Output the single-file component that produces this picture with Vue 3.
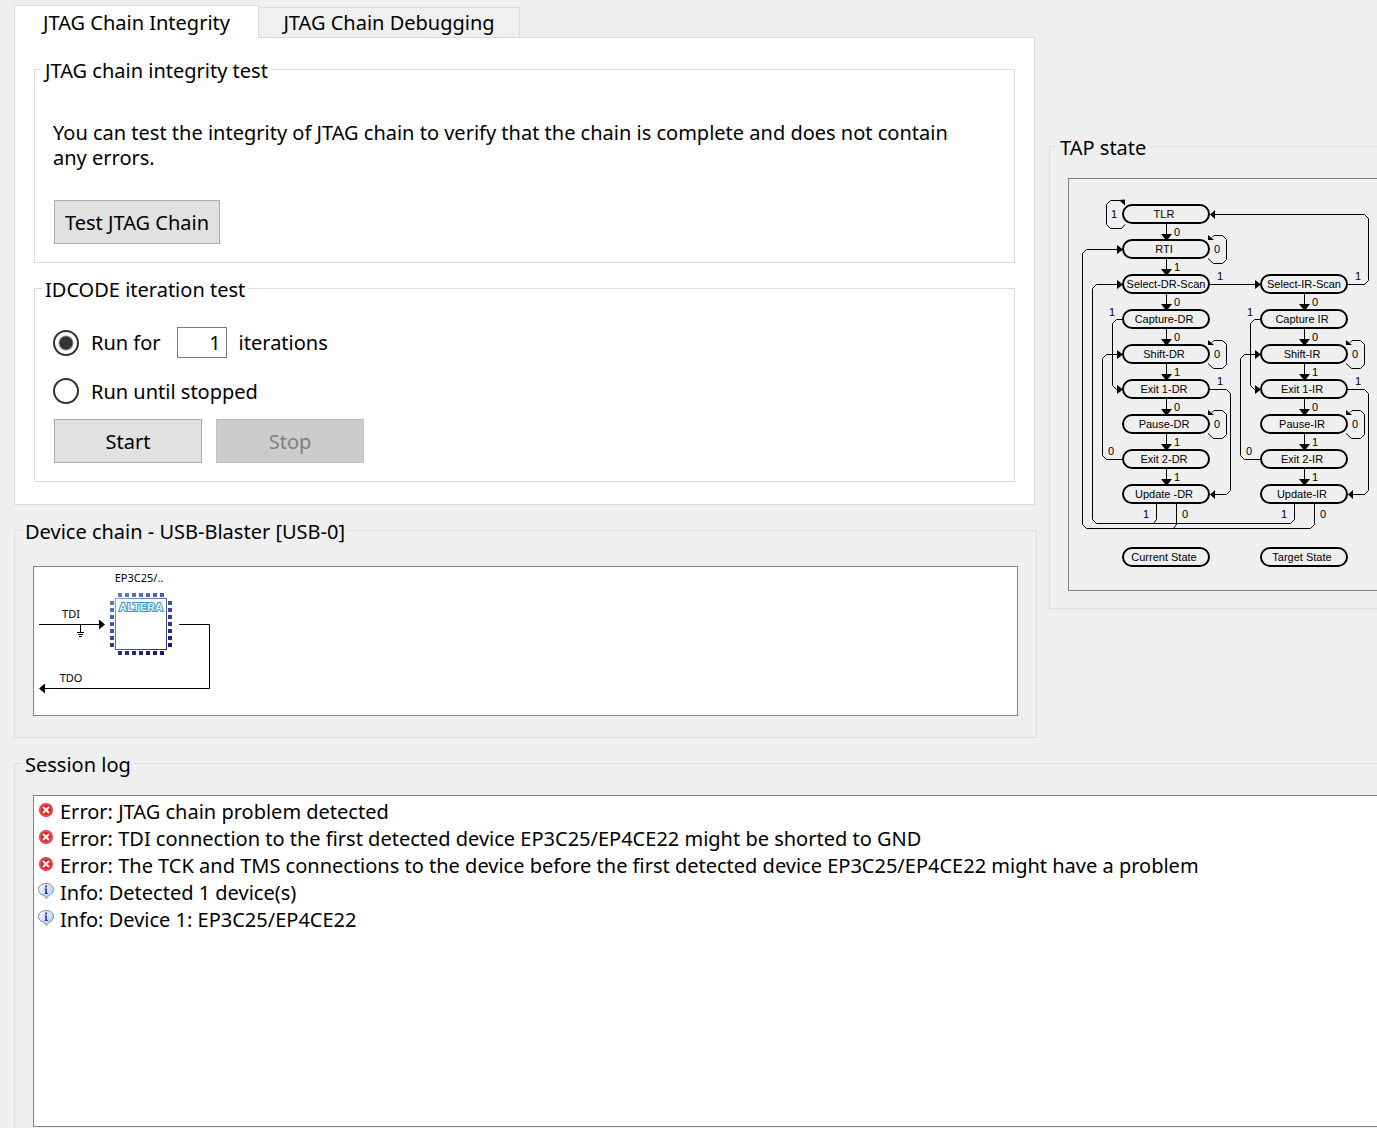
<script setup>
import { ref } from 'vue'

const mode = ref('count')
const iterations = ref('1')
const activeTab = ref(0)
const tabs = ['JTAG Chain Integrity', 'JTAG Chain Debugging']

const log = [
  { kind: 'error', text: 'Error: JTAG chain problem detected' },
  { kind: 'error', text: 'Error: TDI connection to the first detected device EP3C25/EP4CE22 might be shorted to GND' },
  { kind: 'error', text: 'Error: The TCK and TMS connections to the device before the first detected device EP3C25/EP4CE22 might have a problem' },
  { kind: 'info', text: 'Info: Detected 1 device(s)' },
  { kind: 'info', text: 'Info: Device 1: EP3C25/EP4CE22' },
]

// Chip pins: light blue at the top left, navy at the bottom right
const pinColor = (x, y) => {
  const t = Math.min(1, Math.max(0, ((x - 76) * 0.4 + (y - 26) * 0.8) / 64))
  const mix = (a, b) => Math.round(a + (b - a) * t)
  return `rgb(${mix(92, 30)}, ${mix(132, 24)}, ${mix(200, 116)})`
}
const pins = []
for (let i = 0; i < 7; i++) {
  pins.push({ x: 84 + i * 7, y: 26 }, { x: 84 + i * 7, y: 84 })
  pins.push({ x: 76, y: 34 + i * 7 }, { x: 134, y: 34 + i * 7 })
}

// TAP controller: column x offset, row top
const row = (r) => 26 + r * 35
const states = [
  { label: 'TLR', x: 0, y: row(0) },
  { label: 'RTI', x: 0, y: row(1) },
  { label: 'Select-DR-Scan', x: 0, y: row(2), tx: 97 },
  { label: 'Capture-DR', x: 0, y: row(3) },
  { label: 'Shift-DR', x: 0, y: row(4) },
  { label: 'Exit 1-DR', x: 0, y: row(5) },
  { label: 'Pause-DR', x: 0, y: row(6) },
  { label: 'Exit 2-DR', x: 0, y: row(7) },
  { label: 'Update -DR', x: 0, y: row(8) },
  { label: 'Select-IR-Scan', x: 138, y: row(2), tx: 97 },
  { label: 'Capture IR', x: 138, y: row(3) },
  { label: 'Shift-IR', x: 138, y: row(4) },
  { label: 'Exit 1-IR', x: 138, y: row(5) },
  { label: 'Pause-IR', x: 138, y: row(6) },
  { label: 'Exit 2-IR', x: 138, y: row(7) },
  { label: 'Update-IR', x: 138, y: row(8) },
  { label: 'Current State', x: 0, y: 369 },
  { label: 'Target State', x: 138, y: 369 },
]
const bits = ['0', '1', '0', '0', '1', '0', '1', '1']
const steps = [
  ...bits.map((bit, r) => ({ bit, x: 0, y: row(r) })),
  ...bits.slice(2).map((bit, r) => ({ bit, x: 138, y: row(r + 2) })),
]
const loops = [
  { x: 0, y: row(1) },
  { x: 0, y: row(4) },
  { x: 0, y: row(6) },
  { x: 138, y: row(4) },
  { x: 138, y: row(6) },
]
</script>

<template>
  <main class="page">
    <div class="top">
      <div class="left">
        <section class="tabs">
          <div class="tablist" role="tablist">
            <button
              v-for="(tab, i) in tabs"
              :key="tab"
              type="button"
              role="tab"
              class="tab"
              :class="{ active: i === activeTab }"
              :aria-selected="i === activeTab"
              @click="activeTab = i"
            >{{ tab }}</button>
          </div>
          <div class="panel" role="tabpanel">
            <fieldset class="group">
              <legend>JTAG chain integrity test</legend>
              <div class="body integrity">
                <p>You can test the integrity of JTAG chain to verify that the chain is complete and does not contain any errors.</p>
                <div class="actions">
                  <button type="button" class="btn test">Test JTAG Chain</button>
                </div>
              </div>
            </fieldset>
            <fieldset class="group">
              <legend>IDCODE iteration test</legend>
              <div class="body idcode">
                <div class="option count">
                  <input id="run-count" v-model="mode" type="radio" name="mode" value="count">
                  <label for="run-count">Run for</label>
                  <input id="iterations" v-model="iterations" class="number" type="text">
                  <label for="iterations">iterations</label>
                </div>
                <div class="option">
                  <input id="run-until" v-model="mode" type="radio" name="mode" value="until">
                  <label for="run-until">Run until stopped</label>
                </div>
                <div class="actions">
                  <button type="button" class="btn">Start</button>
                  <button type="button" class="btn" disabled>Stop</button>
                </div>
              </div>
            </fieldset>
          </div>
        </section>

        <fieldset class="group">
          <legend>Device chain - USB-Blaster [USB-0]</legend>
          <div class="body device">
            <div class="canvas white">
              <svg width="200" height="148" viewBox="0 0 200 148">
                <defs>
                  <linearGradient id="chip" x1="0" y1="0" x2="1" y2="1">
                    <stop offset="0" stop-color="#86a8d8" />
                    <stop offset="1" stop-color="#23306e" />
                  </linearGradient>
                </defs>
                <path class="wire" d="M5 57.5H68M46.5 58V65M43 65.5H50M44 67.5H49M45 69.5H48M145 57.5H175.5V121.5H8" />
                <path d="M65 52.5L71 57.5L65 62.5ZM11 116.5L5 121.5L11 126.5Z" />
                <rect x="81.5" y="31.5" width="51" height="51" fill="#fff" stroke="url(#chip)" />
                <rect v-for="(p, i) in pins" :key="i" :x="p.x" :y="p.y" width="4" height="4" :fill="pinColor(p.x, p.y)" />
                <text class="brand" x="107" y="44" text-anchor="middle">ALTERA</text>
                <g class="net">
                  <text x="105" y="15" text-anchor="middle">EP3C25/..</text>
                  <text x="37" y="51" text-anchor="middle">TDI</text>
                  <text x="37" y="115" text-anchor="middle">TDO</text>
                </g>
              </svg>
            </div>
          </div>
        </fieldset>
      </div>

      <fieldset class="group tap">
        <legend>TAP state</legend>
        <div class="body tap-body">
          <div class="canvas open">
            <svg class="states" width="308" height="411" viewBox="0 0 308 411">
              <path class="wire" d="M51 21.5H41.5L37.5 25.5V45.5L41.5 49.5H52.5L56 45.5" />
              <path d="M50 21L56 20.500V26.500Z" />
              <path class="wire" d="M146 35.5H295.500L299.500 39.500V101.500L295.500 105.500H279M141 105.500H190" />
              <path class="wire" d="M52 70.500H17.500L13.500 74.500V345.500L17.500 349.500H241.500L245.500 345.500V324M107.500 324V345.500L104.500 349.500" />
              <path class="wire" d="M52 105.500H27.500L23.500 109.500V340.500L27.500 344.500H221.500L225.500 340.500V324M87.500 324V340.500L84.500 344.500" />
              <path d="M146 31V40L141 35.500ZM48 66V75L54 70.500ZM48 101V110L54 105.500ZM186 101V110L192 105.500Z" />
              <g v-for="x in [0, 138]" :key="x" :transform="`translate(${x} 0)`">
                <path class="wire" d="M53 140.500H47.500L43.500 144.500V206.500L47.500 210.500H52" />
                <path class="wire" d="M52 175.500H37.500L33.500 179.500V276.500L37.500 280.500H53" />
                <path class="wire" d="M141 210.500H157.500L161.500 214.500V311.500L157.500 315.500H146" />
                <path d="M48 206V215L54 210.500ZM48 171V180L54 175.500ZM146 311V320L141 315.500Z" />
                <g text-anchor="middle">
                  <text x="43" y="137">1</text>
                  <text x="42" y="276">0</text>
                  <text x="151" y="101">1</text>
                  <text x="151" y="206">1</text>
                  <text x="77" y="339">1</text>
                  <text x="116" y="339">0</text>
                </g>
              </g>
              <text x="45" y="39" text-anchor="middle">1</text>
              <g v-for="(s, i) in steps" :key="'s' + i" :transform="`translate(${s.x} ${s.y})`">
                <path class="wire" d="M97.500 19V32" />
                <path d="M92 29H103L99 34H96Z" />
                <text x="105" y="31">{{ s.bit }}</text>
              </g>
              <g v-for="(l, i) in loops" :key="'l' + i" :transform="`translate(${l.x} ${l.y})`">
                <path class="wire" d="M143 -2.500L145 -4.500H153.500L157.500 -0.500V19.500L153.500 23.500H144.500L139 18.500" />
                <path d="M139 -5V0H145Z" />
                <text x="148" y="13" text-anchor="middle">0</text>
              </g>
              <g v-for="s in states" :key="s.label" :transform="`translate(${s.x} ${s.y})`">
                <rect class="state" x="54" width="86" height="18" rx="9" />
                <text :x="s.tx || 95" y="13" text-anchor="middle">{{ s.label }}</text>
              </g>
            </svg>
          </div>
        </div>
      </fieldset>
    </div>

    <fieldset class="group session">
      <legend>Session log</legend>
      <div class="body session-body">
        <ul class="log">
          <li v-for="line in log" :key="line.text">
            <svg v-if="line.kind === 'error'" width="16" height="16" viewBox="0 0 16 16">
              <circle cx="8" cy="8" r="7" fill="#e2252b" />
              <circle cx="8" cy="8" r="6" fill="none" stroke="#f0686a" />
              <path d="M5 5L11 11M11 5L5 11" stroke="#fff" stroke-width="2" />
            </svg>
            <svg v-else width="16" height="16" viewBox="0 0 16 16">
              <defs>
                <linearGradient id="bubble" x1="0" y1="0" x2="1" y2="1">
                  <stop offset="0" stop-color="#fff" />
                  <stop offset="1" stop-color="#a9c4f0" />
                </linearGradient>
              </defs>
              <path d="M8 .5C12.200 .5 15.500 3 15.500 6.500C15.500 9.300 13.500 11.500 11 12.200L8.500 15.500L6 12.300C2.800 11.800 .5 9.500 .5 6.500C.5 3 3.800 .5 8 .5Z" fill="url(#bubble)" stroke="#76879f" />
              <path d="M7 2.500H9V4.500H7ZM6.500 5.500H9V10H10V11H6.500V10H7.200V6.500H6.500Z" fill="#2747a8" />
            </svg>
            <span>{{ line.text }}</span>
          </li>
        </ul>
      </div>
    </fieldset>
  </main>
</template>

<style>
body {
  background: #efefef;
}
</style>

<style scoped>
.page,
.page * {
  box-sizing: border-box;
}
.page {
  height: 100vh;
  display: flex;
  flex-direction: column;
  gap: 11px;
  padding: 5px 0 0 14px;
  font-family: "Noto Sans", sans-serif;
  font-size: 20px;
  line-height: 25px;
  color: #000;
}
.page button,
.page input {
  font: inherit;
  color: inherit;
  margin: 0;
}
svg {
  display: block;
  flex: none;
}
.top {
  flex: none;
  display: grid;
  grid-template-columns: minmax(0, 1fr) 328px;
  gap: 12px;
  align-items: start;
}
.left {
  display: flex;
  flex-direction: column;
  gap: 11px;
}
.tabs {
  margin-right: 2px;
}
.tablist {
  display: flex;
  align-items: flex-end;
}
.tab {
  height: 30px;
  min-width: 261px;
  padding: 0 21px;
  border: 1px solid #dadada;
  border-width: 1px 1px 0 0;
  background: #f0f0f0;
  white-space: nowrap;
}
.tab.active {
  height: 33px;
  min-width: 245px;
  margin-bottom: -1px;
  border-left-width: 1px;
  background: #fff;
  position: relative;
}
.panel {
  display: flex;
  flex-direction: column;
  gap: 11px;
  padding: 17px 19px 22px;
  border: 1px solid #dadada;
  background: #fff;
}
.group {
  min-width: 0;
  margin: 0;
  padding: 0;
  border: 1px solid #dcdcdc;
}
legend {
  height: 28px;
  margin-left: 7px;
  padding: 3px 3px 0;
}
.body {
  padding: 0 18px 18px;
}
.integrity {
  padding-top: 37px;
}
.integrity p {
  margin: 0 0 30px;
  padding-right: 24px;
}
.btn {
  width: 148px;
  height: 44px;
  padding: 0;
  border: 1px solid #adadad;
  background: #e1e1e1;
}
.page .btn:disabled {
  border-color: #bfbfbf;
  background: #ccc;
  color: #808080;
}
.btn.test {
  width: 166px;
}
.idcode {
  padding-top: 25px;
}
.option {
  display: flex;
  align-items: center;
  height: 26px;
  margin-bottom: 15px;
}
.option.count {
  height: 31px;
  margin-bottom: 20px;
}
.option input[type="radio"] {
  appearance: none;
  width: 26px;
  height: 26px;
  margin-right: 12px;
  border: 2px solid #333;
  border-radius: 50%;
  background: #fff;
}
.option input[type="radio"]:checked {
  background: radial-gradient(circle, #333 6px, #fff 8px);
}
.page .number {
  width: 50px;
  height: 31px;
  margin: 0 12px 0 16px;
  padding: 0 5px;
  border: 1px solid #7a7a7a;
  background: #fff;
  text-align: right;
}
.actions {
  display: flex;
  gap: 14px;
  padding-left: 1px;
}
.device {
  padding-top: 22px;
  padding-bottom: 21px;
}
.canvas {
  border: 1px solid #828282;
  overflow: hidden;
}
.canvas.white {
  background: #fff;
}
.tap {
  margin-top: 127px;
  border-right: 0;
}
.tap-body {
  padding: 18px 0 17px 18px;
}
.canvas.open {
  border-right: 0;
}
.wire {
  fill: none;
  stroke: #000;
}
.net {
  font-size: 11px;
}
.brand {
  font: bold 11px "Liberation Sans", sans-serif;
  fill: #d9f1fb;
  stroke: #3f93c6;
  stroke-width: 2;
  paint-order: stroke;
}
.states {
  font: 11px "Liberation Sans", sans-serif;
}
.state {
  fill: none;
  stroke: #000;
  stroke-width: 2;
}
.session {
  flex: 1 0 auto;
  display: flex;
  flex-direction: column;
  border-right: 0;
  border-bottom: 0;
}
.session-body {
  flex: 1;
  display: flex;
  padding: 18px 0 1px 18px;
}
.log {
  flex: 1;
  margin: 0;
  padding: 2px 4px;
  border: 1px solid #828282;
  border-right: 0;
  background: #fff;
  list-style: none;
}
.log li {
  display: flex;
  gap: 6px;
  line-height: 27px;
}
.log svg {
  margin-top: 4px;
}
</style>
